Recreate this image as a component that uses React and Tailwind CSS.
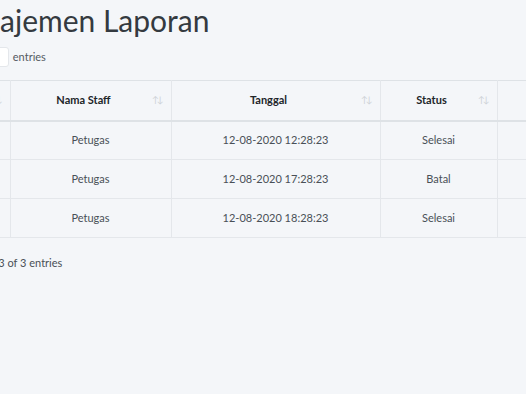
import { useState } from 'react';

const rows = [
  { no: 1, nama: 'Petugas', tanggal: '12-08-2020 12:28:23', status: 'Selesai' },
  { no: 2, nama: 'Petugas', tanggal: '12-08-2020 17:28:23', status: 'Batal' },
  { no: 3, nama: 'Petugas', tanggal: '12-08-2020 18:28:23', status: 'Selesai' },
];

const SortIcon = () => (
  <span className="absolute right-[9px] top-1/2 -translate-y-1/2 text-[9px] tracking-[-2px] text-[#cdd1d6] font-normal">
    ↑↓
  </span>
);

const App = () => {
  const [perPage] = useState(10);

  return (
    <div className="min-h-[394px] w-[526px] overflow-hidden bg-[#f4f6f9] text-[#212529]" style={{ fontFamily: 'Lato, "Open Sans", sans-serif' }}>
      <div className="-ml-[60px] w-[700px]">
        {/* Title */}
        <h1 className="pt-[2px] pl-[1px] text-[30px] leading-[36px] font-normal text-[#343a40]">Manajemen Laporan</h1>

        {/* Length */}
        <div className="mt-[9px] -ml-[2px] flex items-center gap-[4px] text-[11px] text-[#545b62]">
          <span>Show</span>
          <div className="h-[20px] w-[40px] rounded-[3px] border border-[#e4e7eb] bg-white pl-[5px] text-left leading-[18px]">{perPage}</div>
          <span>entries</span>
        </div>

        {/* Table */}
        <table className="mt-[13px] w-[640px] table-fixed border-collapse text-[11px]">
          <colgroup>
            <col className="w-[70px]" />
            <col className="w-[161px]" />
            <col className="w-[209px]" />
            <col className="w-[117px]" />
            <col className="w-[83px]" />
          </colgroup>
          <thead>
            <tr className="h-[40px] border-t border-b-2 border-[#dee2e6]">
              <th className="relative border-r border-[#e4e7eb] pr-[14px] font-bold">No<SortIcon /></th>
              <th className="relative border-r border-[#e4e7eb] pr-[14px] font-bold">Nama Staff<SortIcon /></th>
              <th className="relative border-r border-[#e4e7eb] pr-[14px] font-bold">Tanggal<SortIcon /></th>
              <th className="relative border-r border-[#e4e7eb] pr-[14px] font-bold">Status<SortIcon /></th>
              <th className="relative font-bold">Aksi</th>
            </tr>
          </thead>
          <tbody className="text-[#495057]">
            {rows.map((row) => (
              <tr key={row.no} className="h-[39px] border-b border-[#e4e7eb]">
                <td className="border-r border-[#e4e7eb] text-center">{row.no}</td>
                <td className="border-r border-[#e4e7eb] text-center">{row.nama}</td>
                <td className="border-r border-[#e4e7eb] text-center">{row.tanggal}</td>
                <td className="border-r border-[#e4e7eb] text-center">{row.status}</td>
                <td className="text-center"></td>
              </tr>
            ))}
          </tbody>
        </table>

        {/* Info */}
        <div className="mt-[17px] -ml-[8px] text-[11px] text-[#495057]">Showing 1 to 3 of 3 entries</div>
      </div>
    </div>
  );
};

export default App;
